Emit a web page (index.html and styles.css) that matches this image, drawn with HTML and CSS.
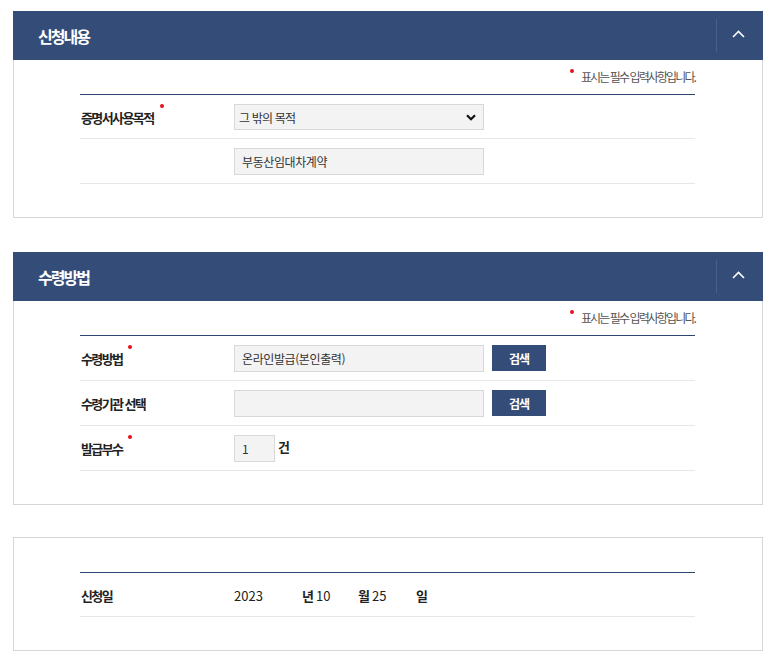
FILE: index.html
```html
<!DOCTYPE html>
<html lang="ko">
<head>
<meta charset="utf-8">
<title>신청</title>
<link rel="stylesheet" href="styles.css">
</head>
<body>
<div class="page">
  <section class="panel">
    <div class="panel-head">
      <h2 class="panel-title">신청내용</h2>
      <button class="toggle" type="button" aria-label="접기">
        <svg width="13" height="8" viewBox="0 0 13 8"><polyline points="1,7 6.5,1.5 12,7" fill="none" stroke="#fff" stroke-width="1.6"/></svg>
      </button>
    </div>
    <div class="panel-body">
      <p class="req-note"><span class="note-dot"></span>표시는 필수 입력사항입니다.</p>
      <div class="form">
        <div class="row">
          <div class="label">증명서사용목적<span class="req"></span></div>
          <div class="field">
            <div class="select"><span>그 밖의 목적</span>
              <svg width="10" height="7" viewBox="0 0 10 7"><polyline points="1,1.2 5,5.2 9,1.2" fill="none" stroke="#111" stroke-width="2.2"/></svg>
            </div>
          </div>
        </div>
        <div class="row">
          <div class="label"></div>
          <div class="field"><input class="input" type="text" value="부동산임대차계약" readonly></div>
        </div>
      </div>
    </div>
  </section>

  <section class="panel panel-2">
    <div class="panel-head">
      <h2 class="panel-title">수령방법</h2>
      <button class="toggle" type="button" aria-label="접기">
        <svg width="13" height="8" viewBox="0 0 13 8"><polyline points="1,7 6.5,1.5 12,7" fill="none" stroke="#fff" stroke-width="1.6"/></svg>
      </button>
    </div>
    <div class="panel-body">
      <p class="req-note"><span class="note-dot"></span>표시는 필수 입력사항입니다.</p>
      <div class="form">
        <div class="row">
          <div class="label">수령방법<span class="req"></span></div>
          <div class="field">
            <input class="input" type="text" value="온라인발급(본인출력)" readonly>
            <button class="btn" type="button">검색</button>
          </div>
        </div>
        <div class="row">
          <div class="label">수령기관 선택</div>
          <div class="field">
            <input class="input" type="text" value="" readonly>
            <button class="btn" type="button">검색</button>
          </div>
        </div>
        <div class="row">
          <div class="label">발급부수<span class="req"></span></div>
          <div class="field">
            <input class="input input-count" type="text" value="1" readonly>
            <span class="unit unit-count">건</span>
          </div>
        </div>
      </div>
    </div>
  </section>

  <section class="panel panel-3">
    <div class="panel-body panel-body-plain">
      <div class="form">
        <div class="row">
          <div class="label">신청일</div>
          <div class="field date">
            <span class="num num-year">2023</span>
            <span class="unit">년</span>
            <span class="num num-month">10</span>
            <span class="unit">월</span>
            <span class="num num-day">25</span>
            <span class="unit">일</span>
          </div>
        </div>
      </div>
    </div>
  </section>
</div>
</body>
</html>
```
FILE: styles.css
```css
* { box-sizing: border-box; }
html, body { margin: 0; padding: 0; background: #fff; }
body {
  font-family: "Noto Sans CJK KR", "Noto Sans", sans-serif;
  color: #222;
}
.page {
  width: 775px;
  padding: 11px 12px 11px 13px;
}
.panel { width: 750px; }
.panel-2 { margin-top: 34px; }
.panel-3 { margin-top: 32px; }

.panel-head {
  height: 49px;
  background: #344d78;
  display: flex;
  align-items: center;
  justify-content: space-between;
  padding-left: 25px;
}
.panel-title {
  margin: 0;
  color: #fff;
  font-size: 16px;
  font-weight: 700;
  letter-spacing: -2px;
  line-height: 20px;
}
.toggle {
  width: 47px;
  height: 33px;
  padding: 0 3px 0 0;
  margin: 0;
  background: transparent;
  border: 0;
  border-left: 1px solid #4a6088;
  display: flex;
  align-items: center;
  justify-content: center;
}
.toggle svg { display: block; margin-top: -3px; }

.panel-body {
  border: 1px solid #d6d6d6;
  border-top: 0;
  padding: 9px 67px 33px 66px;
}
.panel-body-plain {
  border-top: 1px solid #d6d6d6;
  padding-top: 34px;
}
.req-note {
  margin: 0 0 9px;
  text-align: right;
  font-size: 12px;
  line-height: 16px;
  color: #555;
  letter-spacing: -1.9px;
}
.note-dot {
  display: inline-block;
  width: 4px;
  height: 4px;
  border-radius: 50%;
  background: #e8101c;
  vertical-align: top;
  margin-right: 7px;
}
.form { border-top: 1px solid #2d4573; }
.row {
  display: grid;
  grid-template-columns: 154px 1fr;
  align-items: center;
  padding: 9px 0 8px;
  border-bottom: 1px solid #e7e7e7;
  min-height: 44px;
}
.label {
  padding-left: 1px;
  font-size: 13px;
  font-weight: 700;
  color: #222;
  letter-spacing: -1.6px;
  line-height: 17px;
  white-space: nowrap;
}
.req {
  display: inline-block;
  width: 4px;
  height: 4px;
  border-radius: 50%;
  background: #e8101c;
  vertical-align: top;
  margin-left: 6px;
  position: relative;
  top: -5px;
}
.field {
  display: flex;
  align-items: center;
  min-height: 26px;
}
.select {
  width: 250px;
  height: 26px;
  background: #f3f3f3;
  border: 1px solid #d8d8d8;
  display: flex;
  align-items: center;
  justify-content: space-between;
  padding: 0 7px 0 4px;
  font-size: 12px;
  letter-spacing: -0.8px;
  color: #333;
}
.select svg { display: block; }
.input {
  width: 250px;
  height: 27px;
  background: #f3f3f3;
  border: 1px solid #d8d8d8;
  border-radius: 0;
  padding: 0 7px;
  margin: 0;
  font-family: inherit;
  font-size: 12px;
  letter-spacing: -0.4px;
  color: #333;
  outline: none;
}
.input-count { width: 41px; letter-spacing: 0; }
.btn {
  width: 54px;
  height: 26px;
  margin: 0 0 1px 8px;
  padding: 0;
  border: 0;
  background: #344d78;
  color: #fff;
  font-family: inherit;
  font-size: 12px;
  font-weight: 700;
  letter-spacing: -1px;
  align-self: flex-start;
}
.unit {
  font-size: 13px;
  font-weight: 700;
  color: #222;
  line-height: 17px;
  margin-right: 2px;
}
.unit-count { margin-left: 3px; margin-top: -4px; }
.num {
  font-size: 13px;
  color: #222;
  line-height: 17px;
}
.num-year { width: 68px; }
.num-month { width: 42px; }
.num-day { width: 44px; }
```
